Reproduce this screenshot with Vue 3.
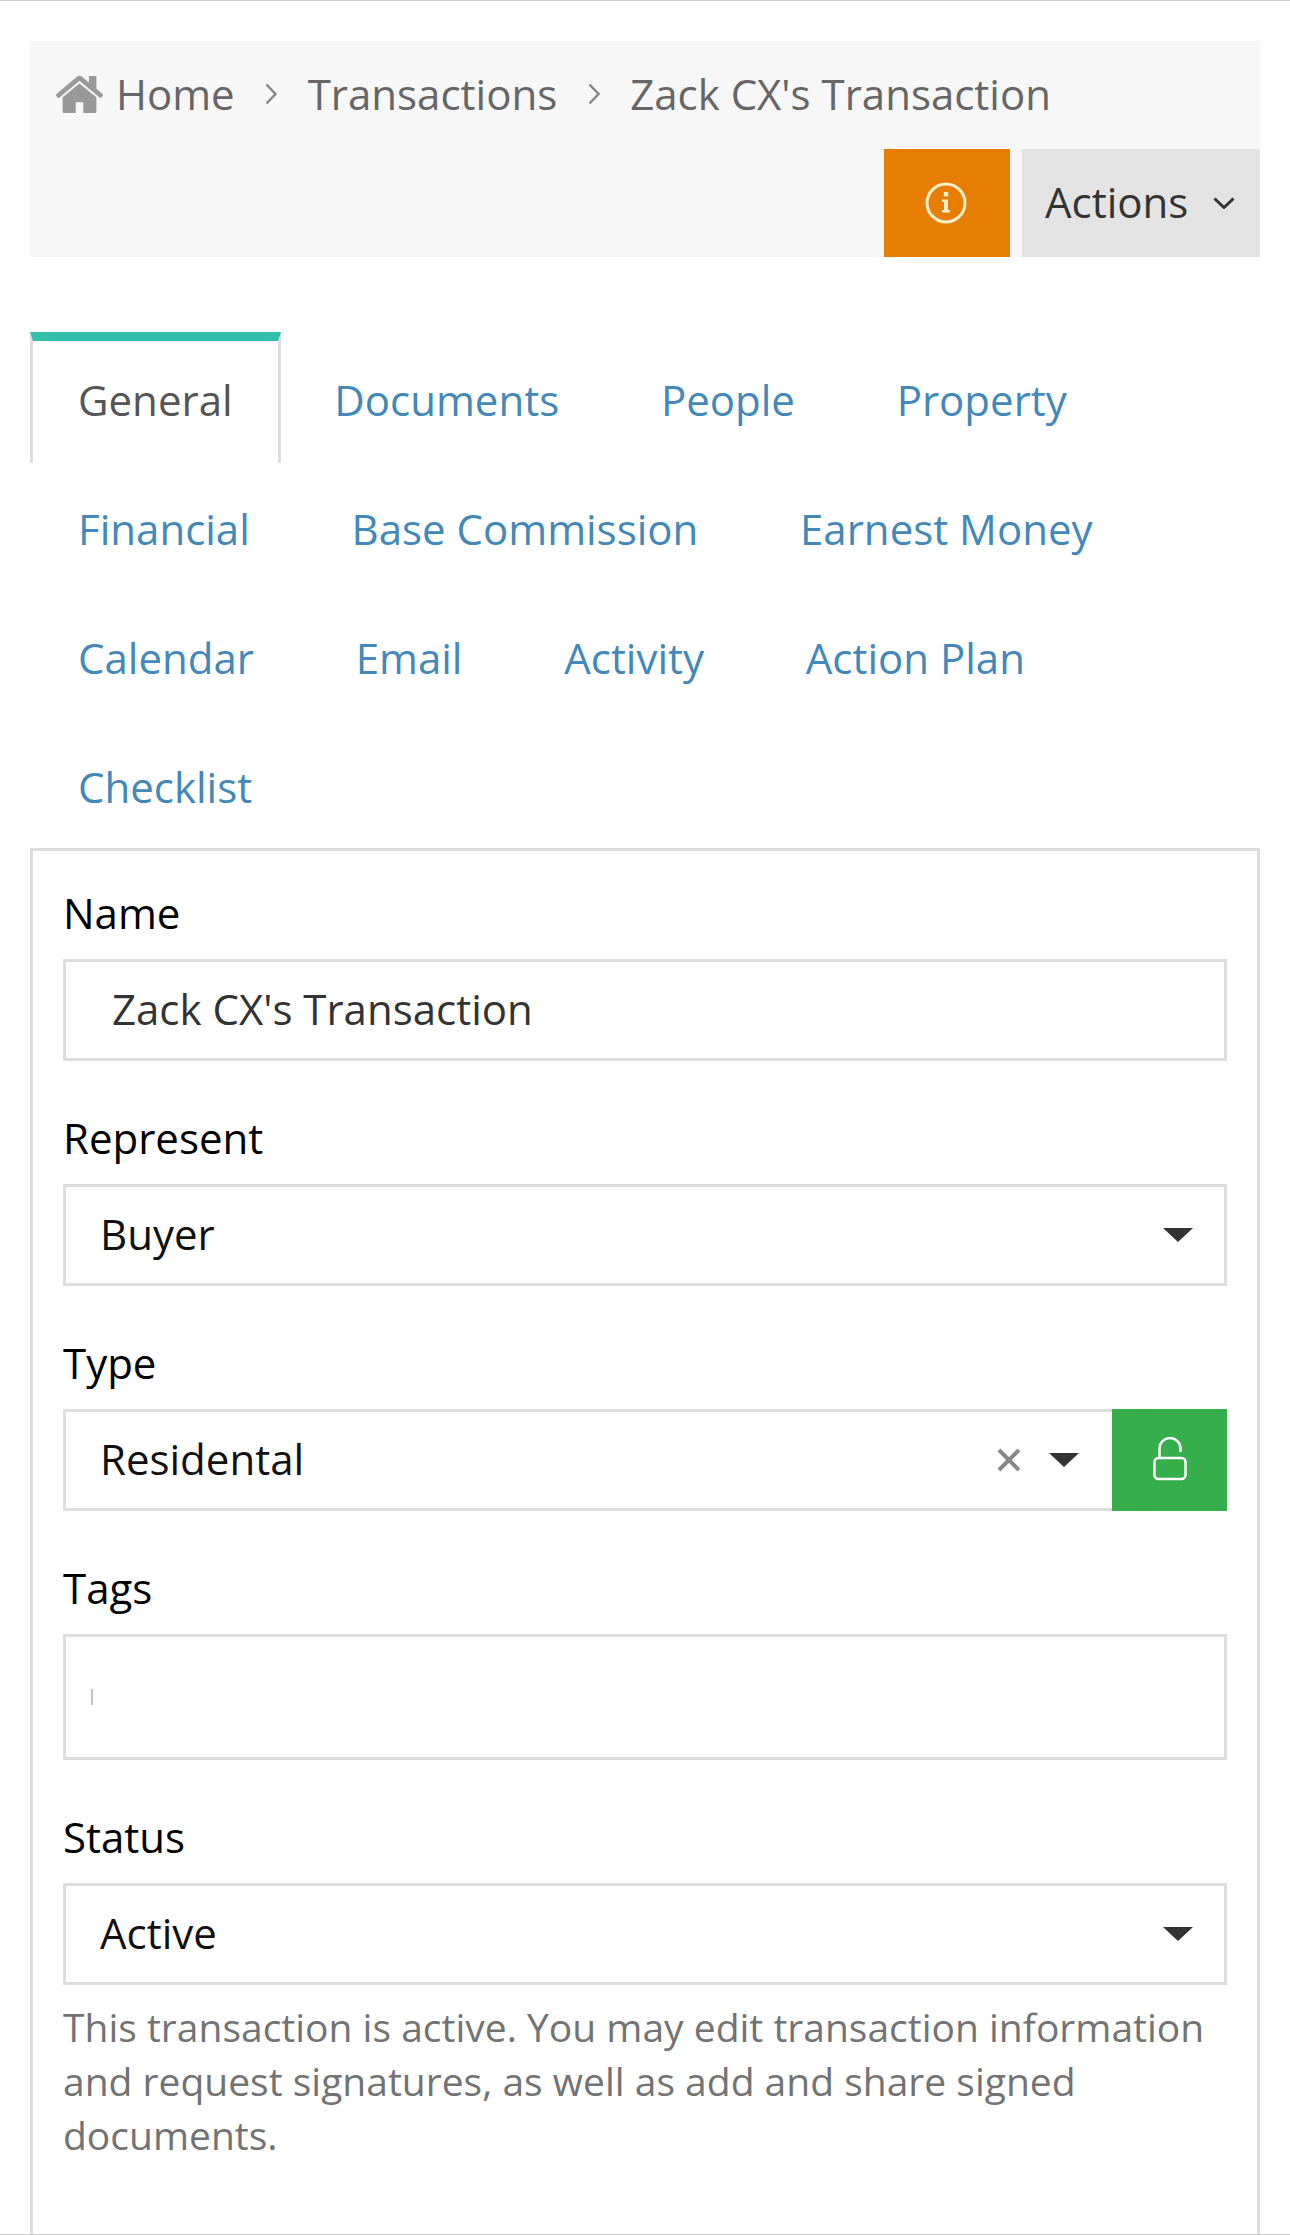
<script setup>
const crumbs = ['Transactions', "Zack CX's Transaction"]
const tabs = ['General', 'Documents', 'People', 'Property', 'Financial', 'Base Commission', 'Earnest Money', 'Calendar', 'Email', 'Activity', 'Action Plan', 'Checklist']
</script>

<template>
  <div class="page">
    <header class="bar">
      <nav class="crumbs">
        <svg class="home" viewBox="96 224 1600 1312"><path d="M1472 992v480q0 26-19 45t-45 19h-384v-384h-256v384h-384q-26 0-45-19t-19-45v-480q0-1 .5-3t.5-3l575-474 575 474q1 2 1 6zm223-69l-62 74q-8 9-21 11h-3q-13 0-21-7l-692-577-692 577q-12 8-24 7-13-2-21-11l-62-74q-8-10-7-23.500t11-21.500l719-599q32-26 76-26t76 26l244 204v-195q0-14 9-23t23-9h192q14 0 23 9t9 23v408l219 182q10 8 11 21.500t-7 23.500z"/></svg>
        <span class="crumb">Home</span>
        <template v-for="c in crumbs" :key="c">
          <svg class="sep" viewBox="0 0 12 22"><path d="M1.500 1.500 10.500 11 1.500 20.500"/></svg>
          <span class="crumb">{{ c }}</span>
        </template>
      </nav>
      <div class="actions">
        <button class="info" type="button">
          <svg viewBox="0 0 42 42" class="info-icon">
            <circle cx="21" cy="21" r="19" />
            <rect x="18.800" y="10" width="4.400" height="4.400" class="fill" />
            <path class="fill" d="M17 17.500h6v10.500h2v2.500h-8v-2.500h2v-8h-2z" />
          </svg>
        </button>
        <button class="act" type="button">
          <span>Actions</span>
          <svg class="chev" viewBox="0 0 22 12"><path d="M1.500 1.500 11 10.500 20.500 1.500"/></svg>
        </button>
      </div>
    </header>

    <ul class="tabs">
      <li v-for="(t, i) in tabs" :key="t" class="tab" :class="{ on: i === 0 }">{{ t }}</li>
    </ul>

    <section class="panel">
      <div class="field">
        <label class="lab">Name</label>
        <input class="box name" readonly value="Zack CX's Transaction" />
      </div>
      <div class="field">
        <label class="lab">Represent</label>
        <div class="box sel"><span>Buyer</span><i class="caret"></i></div>
      </div>
      <div class="field">
        <label class="lab">Type</label>
        <div class="group">
          <div class="box sel grow">
            <span>Residental</span>
            <svg class="clear" viewBox="0 0 24 24"><path d="M2 2 22 22M22 2 2 22"/></svg>
            <i class="caret small"></i>
          </div>
          <button class="lock" type="button">
            <svg viewBox="0 0 34 44" class="lock-icon">
              <path d="M6.500 20V11.500a10.500 10.500 0 0 1 21 0v3.500" />
              <rect x="1.500" y="21" width="31" height="21" rx="4" />
            </svg>
          </button>
        </div>
      </div>
      <div class="field">
        <label class="lab">Tags</label>
        <div class="box tags"><i class="cursor"></i></div>
      </div>
      <div class="field last">
        <label class="lab">Status</label>
        <div class="box sel"><span>Active</span><i class="caret"></i></div>
        <p class="help">This transaction is active. You may edit transaction information and request signatures, as well as add and share signed documents.</p>
      </div>
    </section>
    <div class="rule"></div>
  </div>
</template>

<style>
html, body { margin: 0; background: #fff; }
</style>

<style scoped>
.page {
  position: relative;
  box-sizing: border-box;
  width: 1290px;
  height: 2235px;
  padding: 41px 30px 0;
  overflow: hidden;
  border-top: 1px solid #ccc;
  margin-top: 0;
  font-family: "Open Sans", "Noto Sans", sans-serif;
  font-size: 42px;
  background: #fff;
}
.bar {
  height: 216px;
  margin-top: -1px;
  background: #f7f7f7;
  display: flex;
  flex-direction: column;
}
.crumbs {
  box-sizing: border-box;
  height: 108px;
  display: flex;
  align-items: center;
  padding: 0 0 3px 26px;
  color: #666;
  line-height: 60px;
}
.home { width: 47px; height: 38.500px; fill: #999; margin-right: 13px; margin-top: 1px; flex: none; }
.crumb { white-space: nowrap; }
.sep { width: 12px; height: 22px; margin: 0 30.500px; fill: none; stroke: #888; stroke-width: 2.500; flex: none; }
.actions { height: 108px; display: flex; justify-content: flex-end; gap: 12px; }
button { border: 0; padding: 0; margin: 0; font: inherit; }
.info { box-sizing: border-box; width: 126px; height: 108px; padding-right: 2px; background: #e67e05; display: flex; align-items: center; justify-content: center; }
.info-icon { width: 42px; height: 42px; fill: none; stroke: #fdeecb; stroke-width: 3; }
.info-icon .fill { fill: #fdeecb; stroke: none; }
.act {
  width: 238px; height: 108px; background: #e3e3e3; color: #333;
  display: flex; align-items: center; padding-left: 23px; box-sizing: border-box;
}
.act span { margin-top: -3px; }
.chev { width: 22px; height: 12px; margin-left: 25px; fill: none; stroke: #333; stroke-width: 3; }
.tabs {
  list-style: none; margin: 75px 0 0; padding: 0;
  display: flex; flex-wrap: wrap; width: 1230px;
}
.tab {
  box-sizing: border-box; height: 129px; padding: 37.500px 48px 31.500px; margin-right: 5.750px;
  line-height: 60px; color: #4388b8; white-space: nowrap;
}
.tab.on {
  color: #555; padding: 28.500px 45px;
  border-top: 9px solid #32c0ad;
  border-left: 3px solid #ddd; border-right: 3px solid #ddd;
  height: 131px; margin-bottom: -2px;
}
.panel {
  box-sizing: border-box; width: 1230px; height: 1500px;
  border: 3px solid #ddd; padding: 33px 30px 0;
}
.field { margin-bottom: 48px; }
.lab { display: block; height: 60px; line-height: 57px; margin-bottom: 15px; color: #000; }
.box {
  box-sizing: border-box; display: flex; align-items: center;
  width: 1164px; height: 102px; border: 3px solid #ddd; background: #fff;
  font: inherit; color: #111; outline: 0;
}
.name { padding: 0 46px 3px; color: #333; margin: 0; }
.sel { padding: 0 31px 0 34px; justify-content: flex-start; }
.sel span { flex: 1; margin-top: -3px; }
.caret { width: 0; height: 0; border: 15px solid transparent; border-top: 14px solid #333; border-bottom: 0; }
.group { display: flex; width: 1164px; }
.grow { width: 1049px; border-right: 0; padding-right: 33px; }
.clear { width: 24px; height: 24px; fill: none; stroke: #888; stroke-width: 4; margin-right: 28px; }
.lock { width: 115px; height: 102px; background: #37ae4c; display: flex; align-items: center; justify-content: center; }
.lock-icon { width: 34px; height: 44px; fill: none; stroke: #fff; stroke-width: 2.500; margin-top: -3px; }
.tags { height: 126px; padding-left: 25px; }
.cursor { display: block; width: 2px; height: 16px; background: #c4c4c4; }
.last { margin-bottom: 0; }
.help { margin: 15px 0 0; font-size: 39px; line-height: 54px; color: #737373; }
.rule { position: absolute; left: 0; right: 0; bottom: 0; height: 1px; background: #ccc; }
</style>
